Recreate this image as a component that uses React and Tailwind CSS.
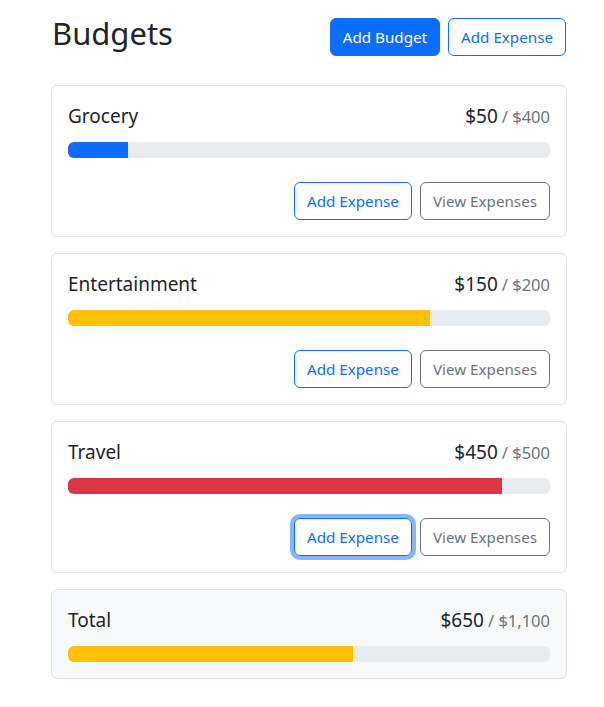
const budgets = [
  { id: 1, name: "Grocery", amount: 50, max: 400 },
  { id: 2, name: "Entertainment", amount: 150, max: 200 },
  { id: 3, name: "Travel", amount: 450, max: 500, focused: true },
];

const fmt = (n) => "$" + n.toLocaleString("en-US");

// <50% primary, hasta 75% warning, resto danger
const barColor = (amount, max) => {
  const ratio = amount / max;
  if (ratio < 0.5) return "bg-[#0d6efd]";
  if (ratio <= 0.75) return "bg-[#ffc107]";
  return "bg-[#dc3545]";
};

const ProgressBar = ({ amount, max }) => {
  const pct = Math.min((amount / max) * 100, 100);
  return (
    <div className="h-4 w-full rounded-[6px] bg-[#e9ecef] overflow-hidden">
      <div
        className={`h-full ${barColor(amount, max)}`}
        style={{ width: `${pct}%` }}
      />
    </div>
  );
};

const BudgetCard = ({ name, amount, max, gray, hideButtons, focused }) => {
  return (
    <div
      className={
        gray
          ? "border border-[#dee2e6] rounded-[6px] bg-[#f8f9fa] p-4"
          : "border border-[#dee2e6] rounded-[6px] bg-white p-4"
      }
    >
      <div className="flex justify-between items-baseline mb-4 h-6 leading-[28px]">
        <div className="text-[19px] text-[#212529]">{name}</div>
        <div className="flex items-baseline">
          <span className="text-[19px] text-[#212529]">{fmt(amount)}</span>
          <span className="text-[16.5px] text-[#6c757d] ml-1">/ {fmt(max)}</span>
        </div>
      </div>
      <ProgressBar amount={amount} max={max} />
      {!hideButtons && (
        <div className="flex justify-end gap-2 mt-6">
          <button
            className={
              focused
                ? "h-[38px] px-3 rounded-[6px] border border-[#0d6efd] text-[#0d6efd] text-[15.2px] shadow-[0_0_0_4px_rgba(13,110,253,0.5)]"
                : "h-[38px] px-3 rounded-[6px] border border-[#0d6efd] text-[#0d6efd] text-[15.2px]"
            }
          >
            Add Expense
          </button>
          <button className="h-[38px] px-3 rounded-[6px] border border-[#6c757d] text-[#6c757d] text-[15.2px]">
            View Expenses
          </button>
        </div>
      )}
    </div>
  );
};

export default function App() {
  const totalAmount = budgets.reduce((s, b) => s + b.amount, 0);
  const totalMax = budgets.reduce((s, b) => s + b.max, 0);

  return (
    <div
      className="w-[604px] min-h-[707px] bg-white"
      style={{ fontFamily: '"Noto Sans", sans-serif' }}
    >
      <div className="w-[516px] ml-[51px] pt-[18px]">
        <div className="flex items-center h-[38px] mb-[29px]">
          <h1 className="text-[31px] leading-[37px] pb-2 text-[#212529] mr-auto pl-px">
            Budgets
          </h1>
          <button className="h-[38px] px-3 rounded-[6px] bg-[#0d6efd] border border-[#0d6efd] text-white text-[15.2px] mr-2">
            Add Budget
          </button>
          <button className="h-[38px] px-3 rounded-[6px] border border-[#0d6efd] text-[#0d6efd] text-[15.2px] mr-px">
            Add Expense
          </button>
        </div>
        <div className="flex flex-col gap-4">
          {budgets.map((b) => (
            <BudgetCard
              key={b.id}
              name={b.name}
              amount={b.amount}
              max={b.max}
              focused={b.focused}
            />
          ))}
          <BudgetCard
            name="Total"
            amount={totalAmount}
            max={totalMax}
            gray
            hideButtons
          />
        </div>
      </div>
    </div>
  );
}
